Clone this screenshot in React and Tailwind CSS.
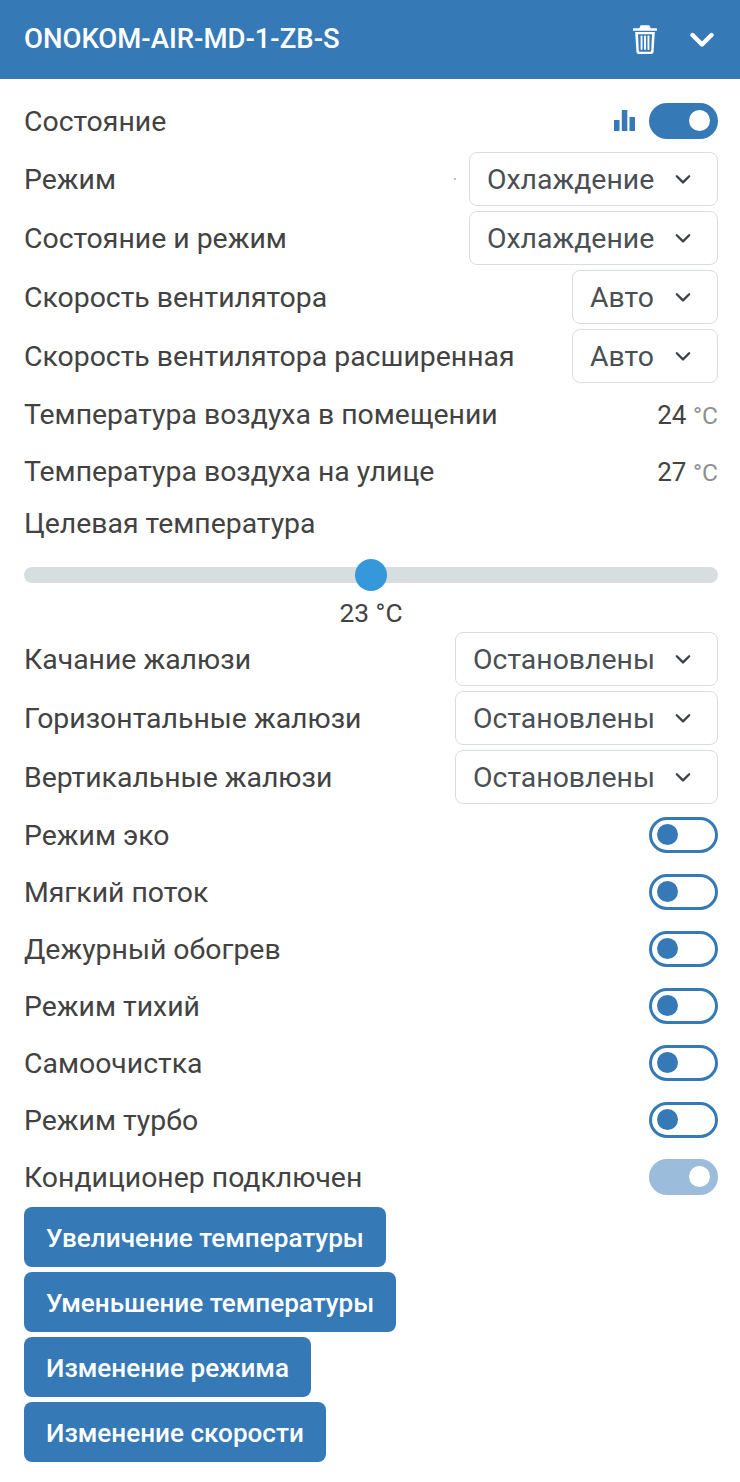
import React from "react";

const Chevron = ({ className }) => (
  <svg viewBox="0 0 16 16" className={className} fill="none" stroke="currentColor" strokeWidth="1.7" strokeLinecap="round" strokeLinejoin="round">
    <path d="M3.5 6 L8 10.5 L12.5 6" />
  </svg>
);

const Select = ({ value, width }) => (
  <div className={`flex h-[54px] items-center justify-between rounded-[8px] border border-[#d8dde3] bg-white pl-[17px] pr-[23px] text-[#4a4f55] ${width}`}>
    <span className="pt-[4px]">{value}</span>
    <Chevron className="h-[22px] w-[22px] text-[#3c4249]" />
  </div>
);

const SelectRow = ({ label, value, width, dot }) => (
  <div className="flex h-[59px] items-center justify-between">
    <span className="pt-[4px]">{label}</span>
    <div className="flex items-center gap-[13px]">
      {dot && <div className="h-[2px] w-[2px] rounded-full bg-[#8fb5d8]" />}
      <Select value={value} width={width} />
    </div>
  </div>
);

const SwitchOff = () => (
  <div className="flex h-[36px] w-[69px] items-center rounded-full border-[3px] border-[#3679b7] bg-white pl-[5px]">
    <div className="h-[21px] w-[21px] rounded-full bg-[#3679b7]" />
  </div>
);

const SwitchOn = ({ muted }) => (
  <div className={`flex h-[36px] w-[69px] items-center justify-end rounded-full pr-[8px] ${muted ? "bg-[#9bbcdb]" : "bg-[#3679b7]"}`}>
    <div className="h-[21px] w-[21px] rounded-full bg-white" />
  </div>
);

const SwitchRow = ({ label }) => (
  <div className="flex h-[57px] items-center justify-between">
    <span className="pt-[4px]">{label}</span>
    <SwitchOff />
  </div>
);

const TempRow = ({ label, value }) => (
  <div className="flex h-[57px] items-center justify-between">
    <span className="pt-[4px]">{label}</span>
    <span className="pt-[4px] text-[26px]">
      {value} <span className="text-[24.5px] text-[#8f8f8f]">°C</span>
    </span>
  </div>
);

const Btn = ({ children }) => (
  <button className="block h-[60px] rounded-[8px] bg-[#3679b7] px-[22px] pt-[3px] text-[26.1px] font-medium text-white">{children}</button>
);

export default function App() {
  return (
    <div className="min-h-[1482px] bg-white text-[28.4px] text-[#424242] font-['Roboto',sans-serif]">
      <div className="flex h-[79px] items-center justify-between bg-[#3679b7] pl-[24px] pr-[26px] text-white">
        <span className="pb-[2px] text-[27.5px] font-medium">ONOKOM-AIR-MD-1-ZB-S</span>
        <div className="flex items-center gap-[33px]">
          <svg viewBox="0 0 24 29" className="h-[29px] w-[24px]" fill="white">
            <path fillRule="evenodd" d="M8.5 0.3 H15.5 A1.5 1.5 0 0 1 17 1.6 L17.6 3.2 H23 A1 1 0 0 1 23 5.8 H1 A1 1 0 0 1 1 3.2 H6.4 L7 1.6 A1.5 1.5 0 0 1 8.5 0.3 Z M2.2 7 H21.8 L20.6 26.2 A2.8 2.8 0 0 1 17.8 29 H6.2 A2.8 2.8 0 0 1 3.4 26.2 Z M5 9.2 L5.8 25.8 A1 1 0 0 0 6.8 26.7 H17.2 A1 1 0 0 0 18.2 25.8 L19 9.2 Z" />
            <rect x="7.6" y="10.5" width="1.9" height="14.5" rx="0.9" />
            <rect x="11.05" y="10.5" width="1.9" height="14.5" rx="0.9" />
            <rect x="14.5" y="10.5" width="1.9" height="14.5" rx="0.9" />
          </svg>
          <svg viewBox="0 0 24 16" className="h-[16px] w-[24px]" fill="none" stroke="white" strokeWidth="4.4" strokeLinecap="round" strokeLinejoin="round">
            <path d="M2.5 3 L12 12.5 L21.5 3" />
          </svg>
        </div>
      </div>

      <div className="pl-[24px] pr-[22px] pt-[13px]">
        <div className="flex h-[57px] items-center justify-between">
          <span className="pt-[4px]">Состояние</span>
          <div className="flex items-center gap-[14px]">
            <svg viewBox="0 0 21 21" className="h-[21px] w-[21px]" fill="#3679b7">
              <rect x="0" y="10" width="5.5" height="11" />
              <rect x="7.8" y="0" width="5.5" height="21" />
              <rect x="15.5" y="7" width="5.5" height="14" />
            </svg>
            <SwitchOn />
          </div>
        </div>
        <SelectRow label="Режим" value="Охлаждение" width="w-[249px]" dot />
        <SelectRow label="Состояние и режим" value="Охлаждение" width="w-[249px]" />
        <SelectRow label="Скорость вентилятора" value="Авто" width="w-[146px]" />
        <SelectRow label="Скорость вентилятора расширенная" value="Авто" width="w-[146px]" />
        <TempRow label="Температура воздуха в помещении" value="24" />
        <TempRow label="Температура воздуха на улице" value="27" />

        <div className="flex h-[47px] items-center pt-[4px]">Целевая температура</div>
        <div className="relative mt-[21px] h-[16px] rounded-full bg-[#d8dde0]">
          <div className="absolute left-[331px] top-[-8px] h-[32px] w-[32px] rounded-full bg-[#3498db]" />
        </div>
        <div className="flex h-[46px] items-center justify-center pt-[16px] text-[26.3px]">23 °C</div>

        <SelectRow label="Качание жалюзи" value="Остановлены" width="w-[263px]" />
        <SelectRow label="Горизонтальные жалюзи" value="Остановлены" width="w-[263px]" />
        <SelectRow label="Вертикальные жалюзи" value="Остановлены" width="w-[263px]" />

        <SwitchRow label="Режим эко" />
        <SwitchRow label="Мягкий поток" />
        <SwitchRow label="Дежурный обогрев" />
        <SwitchRow label="Режим тихий" />
        <SwitchRow label="Самоочистка" />
        <SwitchRow label="Режим турбо" />
        <div className="flex h-[57px] items-center justify-between">
          <span className="pt-[4px]">Кондиционер подключен</span>
          <SwitchOn muted />
        </div>

        <div className="mt-[2px] flex flex-col items-start gap-[5px]">
          <Btn>Увеличение температуры</Btn>
          <Btn>Уменьшение температуры</Btn>
          <Btn>Изменение режима</Btn>
          <Btn>Изменение скорости</Btn>
        </div>
      </div>
    </div>
  );
}
